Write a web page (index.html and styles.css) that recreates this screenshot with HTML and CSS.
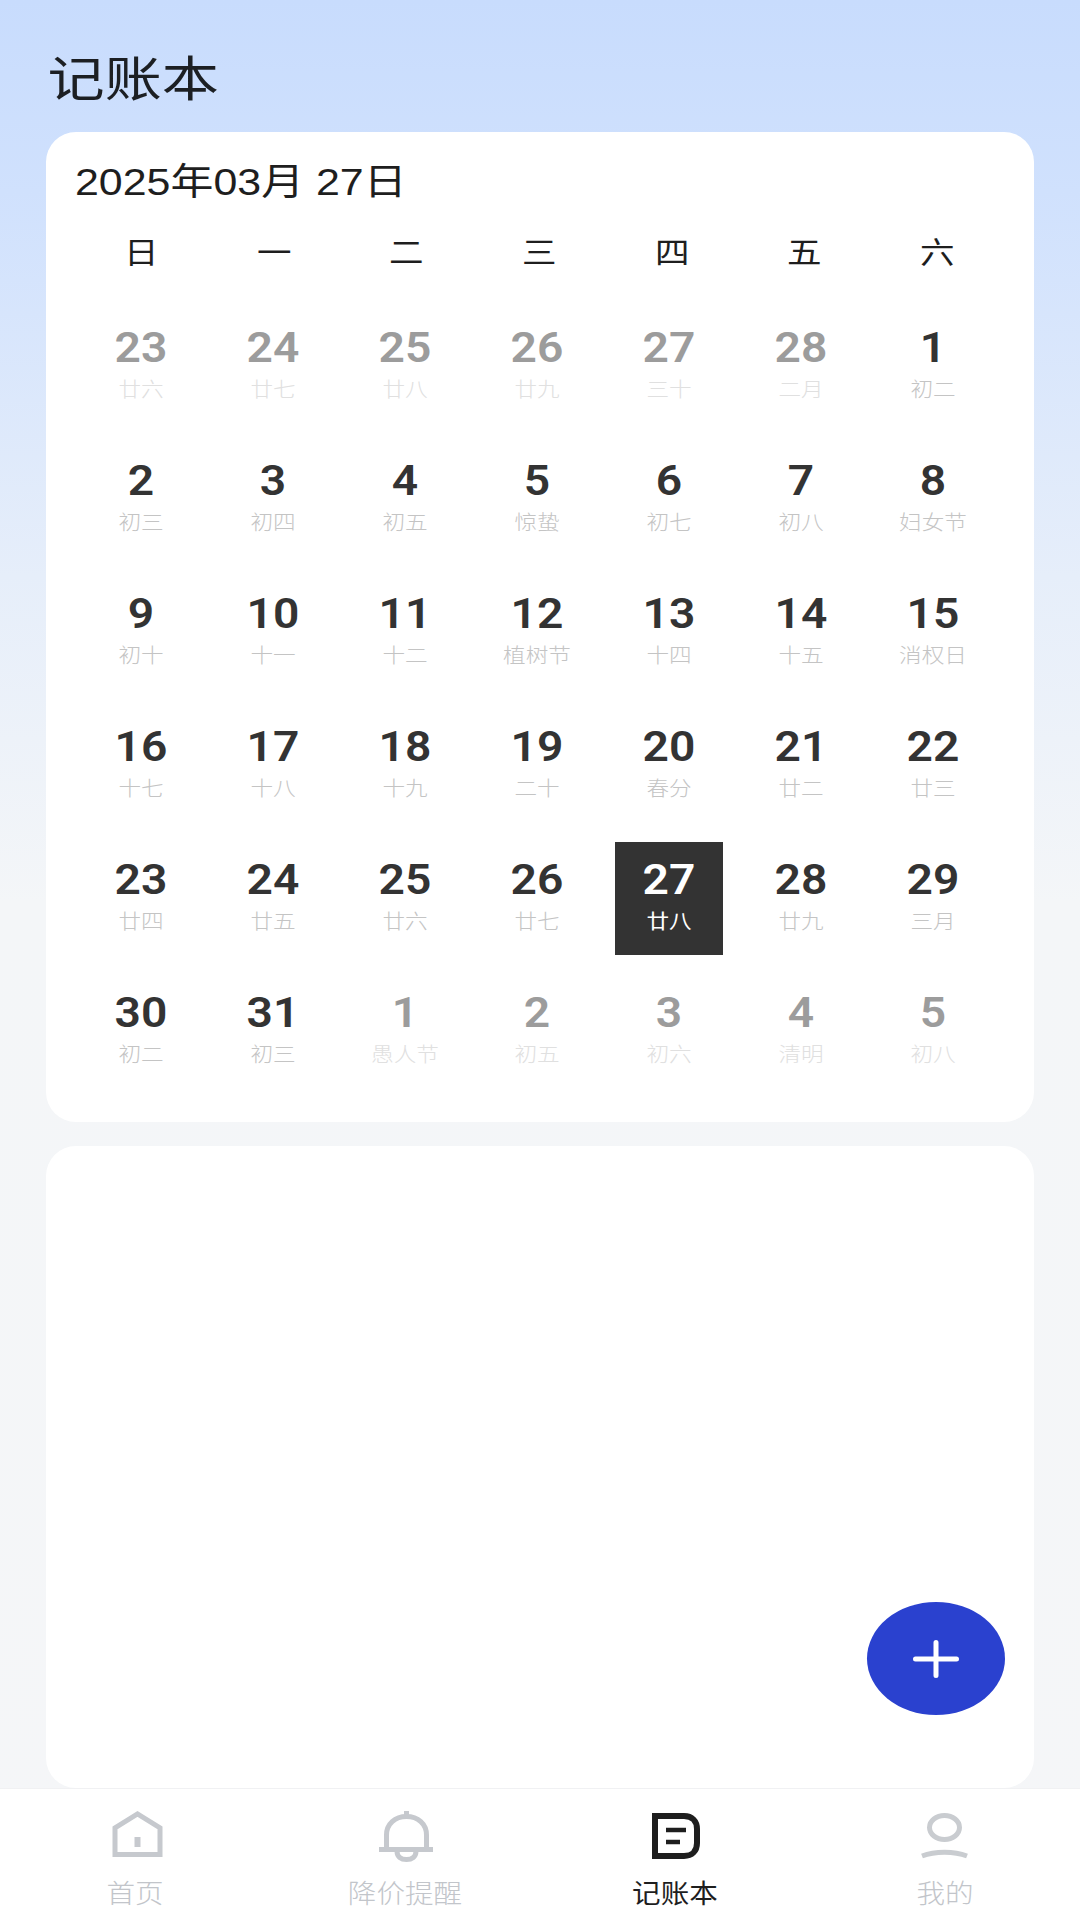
FILE: index.html
```html
<!DOCTYPE html>
<html lang="zh-CN">
<head>
    <meta charset="UTF-8">
    <meta name="viewport" content="width=device-width, initial-scale=1.0">
    <title>记账本</title>
    <link rel="stylesheet" href="styles.css">
</head>
<body>
    <div class="page">
        <div class="title">记账本</div>

        <div class="card calendar">
            <div class="current-date">2025年03月 27日</div>
            <div class="weekdays">
                <div>日</div><div>一</div><div>二</div><div>三</div><div>四</div><div>五</div><div>六</div>
            </div>
            <div class="days">
                <div class="day other"><div class="num">23</div><div class="lunar">廿六</div></div>
                <div class="day other"><div class="num">24</div><div class="lunar">廿七</div></div>
                <div class="day other"><div class="num">25</div><div class="lunar">廿八</div></div>
                <div class="day other"><div class="num">26</div><div class="lunar">廿九</div></div>
                <div class="day other"><div class="num">27</div><div class="lunar">三十</div></div>
                <div class="day other"><div class="num">28</div><div class="lunar">二月</div></div>
                <div class="day"><div class="num">1</div><div class="lunar">初二</div></div>

                <div class="day"><div class="num">2</div><div class="lunar">初三</div></div>
                <div class="day"><div class="num">3</div><div class="lunar">初四</div></div>
                <div class="day"><div class="num">4</div><div class="lunar">初五</div></div>
                <div class="day"><div class="num">5</div><div class="lunar">惊蛰</div></div>
                <div class="day"><div class="num">6</div><div class="lunar">初七</div></div>
                <div class="day"><div class="num">7</div><div class="lunar">初八</div></div>
                <div class="day"><div class="num">8</div><div class="lunar">妇女节</div></div>

                <div class="day"><div class="num">9</div><div class="lunar">初十</div></div>
                <div class="day"><div class="num">10</div><div class="lunar">十一</div></div>
                <div class="day"><div class="num">11</div><div class="lunar">十二</div></div>
                <div class="day"><div class="num">12</div><div class="lunar">植树节</div></div>
                <div class="day"><div class="num">13</div><div class="lunar">十四</div></div>
                <div class="day"><div class="num">14</div><div class="lunar">十五</div></div>
                <div class="day"><div class="num">15</div><div class="lunar">消权日</div></div>

                <div class="day"><div class="num">16</div><div class="lunar">十七</div></div>
                <div class="day"><div class="num">17</div><div class="lunar">十八</div></div>
                <div class="day"><div class="num">18</div><div class="lunar">十九</div></div>
                <div class="day"><div class="num">19</div><div class="lunar">二十</div></div>
                <div class="day"><div class="num">20</div><div class="lunar">春分</div></div>
                <div class="day"><div class="num">21</div><div class="lunar">廿二</div></div>
                <div class="day"><div class="num">22</div><div class="lunar">廿三</div></div>

                <div class="day"><div class="num">23</div><div class="lunar">廿四</div></div>
                <div class="day"><div class="num">24</div><div class="lunar">廿五</div></div>
                <div class="day"><div class="num">25</div><div class="lunar">廿六</div></div>
                <div class="day"><div class="num">26</div><div class="lunar">廿七</div></div>
                <div class="day selected"><div class="num">27</div><div class="lunar">廿八</div></div>
                <div class="day"><div class="num">28</div><div class="lunar">廿九</div></div>
                <div class="day"><div class="num">29</div><div class="lunar">三月</div></div>

                <div class="day"><div class="num">30</div><div class="lunar">初二</div></div>
                <div class="day"><div class="num">31</div><div class="lunar">初三</div></div>
                <div class="day other"><div class="num">1</div><div class="lunar">愚人节</div></div>
                <div class="day other"><div class="num">2</div><div class="lunar">初五</div></div>
                <div class="day other"><div class="num">3</div><div class="lunar">初六</div></div>
                <div class="day other"><div class="num">4</div><div class="lunar">清明</div></div>
                <div class="day other"><div class="num">5</div><div class="lunar">初八</div></div>
            </div>
        </div>

        <div class="card records">
            <div class="add-btn">
                <svg width="46" height="38" viewBox="0 0 46 38"><path d="M2.5 19H43.5M23 2.5V35.5" stroke="#fff" stroke-width="5" stroke-linecap="round" fill="none"/></svg>
            </div>
        </div>

        <div class="tabbar">
            <div class="tab">
                <svg class="tab-icon" width="56" height="56" viewBox="0 0 56 56" fill="none" stroke="#c6c9ce" stroke-width="5">
                    <path d="M8 47.5V21L30.5 7L53 21V47.5Z"/>
                    <path d="M30.5 30V40" stroke-width="6"/>
                </svg>
                <div class="tab-label">首页</div>
            </div>
            <div class="tab">
                <svg class="tab-icon" width="56" height="56" viewBox="0 0 56 56" fill="none" stroke="#c6c9ce" stroke-width="5">
                    <path d="M9.5 42V28C9.5 17 18 9.5 29.5 9.5C41 9.5 49.5 17 49.5 28V42"/>
                    <path d="M2 42.5H56"/>
                    <path d="M29.5 4V9"/>
                    <path d="M20 44C20 50 24 52.5 29.5 52.5C35 52.5 39 50 39 44"/>
                </svg>
                <div class="tab-label">降价提醒</div>
            </div>
            <div class="tab active">
                <svg class="tab-icon" width="56" height="56" viewBox="0 0 56 56" fill="none" stroke="#1e1e1e" stroke-width="6">
                    <path d="M8 9H37C45 9 50 14 50 22V36C50 44 45 49 37 49H8Z"/>
                    <path d="M19 23H39" stroke-width="4.5"/>
                    <path d="M19 35H33" stroke-width="4.5"/>
                </svg>
                <div class="tab-label">记账本</div>
            </div>
            <div class="tab">
                <svg class="tab-icon" width="56" height="56" viewBox="0 0 56 56" fill="none" stroke="#c9ccd0" stroke-width="5">
                    <ellipse cx="27.5" cy="20.5" rx="15" ry="12"/>
                    <path d="M5 49C18 44 37 44 50 49"/>
                </svg>
                <div class="tab-label">我的</div>
            </div>
        </div>
    </div>
</body>
</html>
```

FILE: styles.css
```css
* {
    box-sizing: border-box;
}

body {
    margin: 0;
    padding: 0;
    font-family: "Noto Sans CJK SC", "Noto Sans", sans-serif;
    color: #1e1e1e;
}

.page {
    width: 1080px;
    height: 1920px;
    display: flex;
    flex-direction: column;
    background: linear-gradient(180deg, #c8dcfd 0%, #d0e1fd 10%, #e6eefa 30%, #f4f6f8 47%, #f5f6f8 100%);
    overflow: hidden;
}

/* the screenshot is stretched sideways, so the text gets scaleX to match */
.title {
    height: 132px;
    padding: 42px 0 0 40px;
    font-size: 48px;
    line-height: 66px;
    color: #1c1f23;
    transform: scaleX(1.19);
    transform-origin: left;
}

.card {
    background: #fff;
    border-radius: 30px;
    margin: 0 46px;
}

.calendar {
    height: 990px;
    padding: 26px 29px 0;
}

.current-date {
    font-family: "Liberation Sans", "Noto Sans CJK SC", sans-serif;
    font-size: 37px;
    line-height: 50px;
    color: #1e1e1e;
    transform: scaleX(1.16);
    transform-origin: left;
}

.weekdays {
    display: grid;
    grid-template-columns: repeat(7, 132.7px);
    margin-top: 17px;
    height: 50px;
    font-size: 30px;
    line-height: 50px;
    text-align: center;
    color: #1e1e1e;
}

.weekdays div {
    transform: scaleX(1.15);
}

.days {
    display: grid;
    grid-template-columns: repeat(7, 132px);
    grid-auto-rows: 113px;
    row-gap: 20px;
    justify-items: center;
    margin-top: 35px;
}

.day {
    width: 108px;
    height: 113px;
    padding-top: 13px;
    text-align: center;
}

.num {
    font-family: "Roboto", "Liberation Sans", sans-serif;
    font-size: 42px;
    font-weight: 600;
    line-height: 50px;
    color: #333;
    transform: scaleX(1.1);
}

.lunar {
    font-size: 20px;
    font-weight: 300;
    line-height: 30px;
    margin-top: 1px;
    color: #c4c4c4;
    transform: scaleX(1.13);
}

.day.other .num {
    color: #9c9c9c;
}

.day.other .lunar {
    color: #e0e0e0;
}

.day.selected {
    background: #333;
}

.day.selected .num,
.day.selected .lunar {
    color: #fff;
}

.day.selected .lunar {
    font-weight: 400;
}

.records {
    position: relative;
    height: 642px;
    margin-top: 24px;
}

.add-btn {
    position: absolute;
    right: 29px;
    bottom: 73px;
    width: 138px;
    height: 113px;
    border-radius: 50%;
    background: #2a41cf;
    display: flex;
    align-items: center;
    justify-content: center;
}

.tabbar {
    height: 132px;
    display: flex;
    background: #fff;
    border-top: 1px solid #f0f1f3;
}

.tab {
    flex: 1;
    display: flex;
    flex-direction: column;
    align-items: center;
    padding-top: 18px;
}

.tab-label {
    font-size: 26px;
    font-weight: 300;
    line-height: 36px;
    margin-top: 11px;
    color: #c2c5ca;
    transform: scaleX(1.1);
}

.tab.active .tab-label {
    font-weight: 400;
    color: #1e1e1e;
}
```
